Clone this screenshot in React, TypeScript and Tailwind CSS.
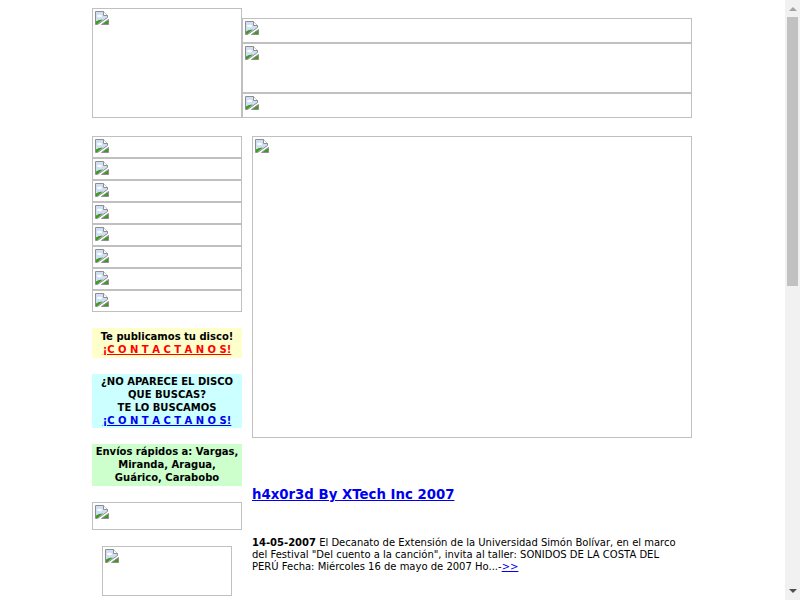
const font = { fontFamily: '"DejaVu Sans", Verdana, sans-serif' };

const BrokenIcon = () => (
  <svg width="16" height="16" viewBox="0 0 16 16" className="block">
    <polygon points="1.5,1.5 9.5,1.5 13.5,5.5 13.5,7.5 3.5,14.5 1.5,14.5" fill="#cfe0f6" stroke="#8e8e8e" />
    <ellipse cx="5.5" cy="6" rx="2.5" ry="1.2" fill="#ffffff" />
    <polygon points="2,14 2,11.5 5,10 9,9.5 3.5,14" fill="#3e9b1f" />
    <polygon points="14.5,9.5 14.5,14.5 7.5,14.5" fill="#3e9b1f" stroke="#8e8e8e" />
    <path d="M9.5 1.5v4h4" fill="#ffffff" stroke="#8e8e8e" />
  </svg>
);

const Img = ({ className }: { className: string }) => (
  <div className={`border border-[#c0c0c0] p-px box-border ${className}`}>
    <BrokenIcon />
  </div>
);

// fake window scrollbar, the page is longer than the viewport
const Scrollbar = () => (
  <div className="flex h-[600px] w-[15px] shrink-0 flex-col bg-[#f1f1f1]">
    <div className="flex h-[17px] items-center justify-center">
      <svg width="8" height="5" viewBox="0 0 8 5">
        <polygon points="0,5 4,1 8,5" fill="#a3a3a3" />
      </svg>
    </div>
    <div className="mx-[2px] h-[269px] bg-[#c1c1c1]" />
    <div className="flex-1" />
    <div className="flex h-[17px] items-center justify-center">
      <svg width="8" height="5" viewBox="0 0 8 5">
        <polygon points="0,0 8,0 4,4" fill="#505050" />
      </svg>
    </div>
  </div>
);

export default function App() {
  return (
    <div className="flex h-[600px] w-[800px] overflow-hidden bg-white text-black" style={font}>
      <div className="min-w-0 flex-1 pl-[92px] pt-2">
        <div className="w-[600px]">
          <div className="flex items-end">
            <Img className="w-[150px] h-[110px]" />
            <div className="flex w-[450px] flex-col">
              <Img className="h-[25px]" />
              <Img className="h-[50px]" />
              <Img className="h-[25px]" />
            </div>
          </div>

          <div className="mt-[18px] flex gap-[10px]">
            <div className="flex w-[150px] flex-col">
              {Array.from({ length: 8 }).map((_, i) => (
                <Img key={i} className="h-[22px]" />
              ))}

              <div className="mt-4 bg-[#ffffcc] py-[2px] text-center text-[10px] font-bold leading-[13px]">
                Te publicamos tu disco!
                <br />
                <a href="#" className="text-[#ff0000] underline">¡C O N T A C T A N O S!</a>
              </div>

              <div className="mt-4 bg-[#ccffff] py-[1px] text-center text-[10px] font-bold leading-[13px]">
                ¿NO APARECE EL DISCO
                <br />
                QUE BUSCAS?
                <br />
                TE LO BUSCAMOS
                <br />
                <a href="#" className="text-[#0000ee] underline">¡C O N T A C T A N O S!</a>
              </div>

              <div className="mt-4 bg-[#ccffcc] pt-[1px] pb-[2px] text-center text-[10px] font-bold leading-[13px]">
                Envíos rápidos a: Vargas,
                <br />
                Miranda, Aragua,
                <br />
                Guárico, Carabobo
              </div>

              <Img className="mt-4 h-[28px]" />
              <Img className="mx-auto mt-4 h-[50px] w-[130px]" />
            </div>

            <div className="w-[440px]">
              <Img className="h-[302px]" />
              <h1 className="mt-[48px] text-[13.3px] font-bold leading-[18px]">
                <a href="#" className="text-[#0000ee] underline">h4x0r3d By XTech Inc 2007</a>
              </h1>
              <p className="mt-[33px] text-[10px] leading-[12px]">
                <b>14-05-2007</b> El Decanato de Extensión de la Universidad Simón Bolívar, en el marco
                <br />
                del Festival "Del cuento a la canción", invita al taller: SONIDOS DE LA COSTA DEL
                <br />
                PERÚ Fecha: Miércoles 16 de mayo de 2007 Ho...-<a href="#" className="text-[#0000ee] underline">&gt;&gt;</a>
              </p>
            </div>
          </div>
        </div>
      </div>
      <Scrollbar />
    </div>
  );
}
